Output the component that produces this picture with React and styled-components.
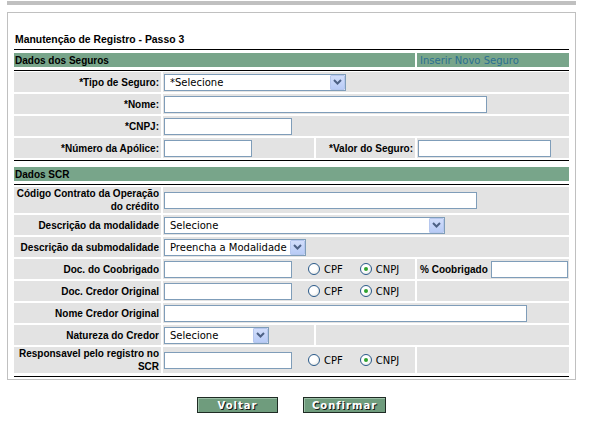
import React from "react"
import styled, { createGlobalStyle } from "styled-components"

const GlobalStyle = createGlobalStyle`
  body {
    margin: 0;
    background: #fff;
    font-family: "DejaVu Sans", Verdana, sans-serif;
    font-size: 10px;
    color: #000;
  }
`

const TopBar = styled.div`
  margin: 1px 0 0 7px;
  width: 569px;
  height: 4px;
  background: #c0c0c0;
`

const Box = styled.div`
  box-sizing: border-box;
  margin: 7px 0 0 7px;
  width: 569px;
  border: 1px solid #c0c0c0;
  padding: 0 6px 2px 6px;
`

const Title = styled.div`
  box-sizing: border-box;
  height: 37px;
  display: flex;
  align-items: flex-end;
  padding: 0 0 3px 1px;
  border-bottom: 1px solid #000;
  font-family: "Liberation Sans", Arial, sans-serif;
  font-weight: bold;
  font-size: 10.4px;
  line-height: 13px;
`

const Rule = styled.div`
  height: 1px;
  background: #000;
  margin-top: ${p => p.$top}px;
  margin-bottom: ${p => p.$bottom}px;
`

const Grid = styled.div`
  display: grid;
  grid-template-columns: 147px 151px 99px 152px;
  column-gap: 2px;
  row-gap: 2px;
  margin-top: ${p => p.$top || 0}px;
`

const Head = styled.div`
  height: 14px;
  background: #78a58a;
  display: flex;
  align-items: center;
  padding-left: ${p => (p.$link ? 3 : 1)}px;
  grid-column: ${p => p.$span || "auto"};
  font-family: ${p => (p.$link ? '"DejaVu Sans", Verdana, sans-serif' : '"Liberation Sans", Arial, sans-serif')};
  font-weight: ${p => (p.$link ? "normal" : "bold")};
  font-size: 10px;
  color: ${p => (p.$link ? "#2b6f92" : "#000")};
`

const Label = styled.div`
  box-sizing: border-box;
  height: ${p => p.$h || 20}px;
  background: #e3e3e3;
  display: flex;
  align-items: center;
  justify-content: flex-end;
  text-align: right;
  padding-right: 2px;
  font-family: "Liberation Sans", Arial, sans-serif;
  font-weight: bold;
  font-size: 10px;
  line-height: 13px;
`

const Cell = styled.div`
  box-sizing: border-box;
  height: ${p => p.$h || 20}px;
  background: #e3e3e3;
  display: flex;
  align-items: center;
  padding-left: ${p => p.$pad ?? 1}px;
  grid-column: ${p => p.$span || "auto"};
`

const Input = styled.input`
  box-sizing: border-box;
  width: ${p => p.$w}px;
  height: 17px;
  border: 1px solid #7f9db9;
  background: #fff;
  margin: 0;
  padding: 0 3px;
  font-family: "DejaVu Sans", Verdana, sans-serif;
  font-size: 10px;
  outline: none;
`

const Select = styled.div`
  box-sizing: border-box;
  width: ${p => p.$w}px;
  height: 17px;
  border: 1px solid #7f9db9;
  background: #fff;
  display: flex;
  align-items: center;
  padding: 0 0 0 5px;
  font-family: "DejaVu Sans", Verdana, sans-serif;
  font-size: 10px;
  white-space: nowrap;
`

const SelectText = styled.span`
  flex: 1;
  overflow: hidden;
`

const Arrow = styled.span`
  box-sizing: border-box;
  width: 15px;
  height: 15px;
  border: 1px solid #b6c7ee;
  border-radius: 1px;
  background: linear-gradient(#d2defb, #b8cbf6);
  display: flex;
  align-items: center;
  justify-content: center;
`

const Radio = styled.span`
  box-sizing: border-box;
  width: 12px;
  height: 12px;
  border: 1px solid #2a5a8a;
  border-radius: 50%;
  background: radial-gradient(circle at 40% 40%, #fff 40%, #dcdcd6);
  display: flex;
  align-items: center;
  justify-content: center;
  margin-left: ${p => p.$left}px;
  margin-right: 4px;
  &::after {
    content: "";
    width: 4px;
    height: 4px;
    border-radius: 50%;
    background: ${p => (p.$on ? "#2fa32f" : "transparent")};
  }
`

const RadioText = styled.span`
  font-family: "DejaVu Sans", Verdana, sans-serif;
  font-size: 10px;
`

const InlineLabel = styled.span`
  font-family: "Liberation Sans", Arial, sans-serif;
  font-weight: bold;
  font-size: 10px;
  margin-right: 3px;
`

const Buttons = styled.div`
  width: 569px;
  margin: 17px 0 0 7px;
  display: flex;
  justify-content: center;
  gap: 25px;
`

const Button = styled.button`
  box-sizing: border-box;
  width: ${p => p.$w}px;
  height: 16px;
  padding: 0;
  border: 1px solid #1f2b24;
  background: #6f9c7d;
  box-shadow: inset 1px 1px 0 #9cc0a7;
  color: #fff;
  font-family: "DejaVu Sans", Verdana, sans-serif;
  font-weight: bold;
  font-size: 10px;
  letter-spacing: 1px;
  text-shadow: 1px 1px 0 #111;
  cursor: pointer;
`

const Chevron = () => (
  <svg width="9" height="6" viewBox="0 0 9 6">
    <polyline points="1,1 4.5,4.5 8,1" fill="none" stroke="#4d6185" strokeWidth="2" />
  </svg>
)

const Combo = ({ w, children }) => (
  <Select $w={w}>
    <SelectText>{children}</SelectText>
    <Arrow><Chevron /></Arrow>
  </Select>
)

const DocChoice = () => (
  <>
    <Input $w={128} />
    <Radio $left={16} />
    <RadioText>CPF</RadioText>
    <Radio $left={17} $on />
    <RadioText>CNPJ</RadioText>
  </>
)

export default function App() {
  return (
    <>
      <GlobalStyle />
      <TopBar />
      <Box>
        <Title>Manutenção de Registro - Passo 3</Title>

        <Grid $top={3}>
          <Head $span="1 / 4">Dados dos Seguros</Head>
          <Head $link>Inserir Novo Seguro</Head>
        </Grid>
        <Rule $top={3} $bottom={1} />
        <Grid>
          <Label>*Tipo de Seguro:</Label>
          <Cell $span="2 / 5"><Combo w={182}>*Selecione</Combo></Cell>

          <Label>*Nome:</Label>
          <Cell $span="2 / 5"><Input $w={323} /></Cell>

          <Label>*CNPJ:</Label>
          <Cell $span="2 / 5"><Input $w={128} /></Cell>

          <Label>*Número da Apólice:</Label>
          <Cell><Input $w={88} /></Cell>
          <Label>*Valor do Seguro:</Label>
          <Cell><Input $w={133} /></Cell>
        </Grid>

        <Rule $top={2} $bottom={6} />
        <Grid>
          <Head $span="1 / 5">Dados SCR</Head>
        </Grid>
        <Rule $top={3} $bottom={2} />
        <Grid>
          <Label $h={26}>Código Contrato da Operação<br />do crédito</Label>
          <Cell $h={26} $span="2 / 5"><Input $w={313} /></Cell>

          <Label>Descrição da modalidade</Label>
          <Cell $span="2 / 5"><Combo w={281}>Selecione</Combo></Cell>

          <Label>Descrição da submodalidade</Label>
          <Cell $span="2 / 5"><Combo w={142}>Preencha a Modalidade</Combo></Cell>

          <Label>Doc. do Coobrigado</Label>
          <Cell $span="2 / 4"><DocChoice /></Cell>
          <Cell $pad={3}>
            <InlineLabel>% Coobrigado</InlineLabel>
            <Input $w={77} />
          </Cell>

          <Label>Doc. Credor Original</Label>
          <Cell $span="2 / 4"><DocChoice /></Cell>
          <Cell />

          <Label>Nome Credor Original</Label>
          <Cell $span="2 / 5"><Input $w={363} /></Cell>

          <Label>Natureza do Credor</Label>
          <Cell><Combo w={105}>Selecione</Combo></Cell>
          <Cell $span="3 / 5" />

          <Label $h={26}>Responsavel pelo registro no<br />SCR</Label>
          <Cell $h={26} $span="2 / 4"><DocChoice /></Cell>
          <Cell $h={26} />
        </Grid>
        <Rule $top={3} $bottom={0} />
      </Box>

      <Buttons>
        <Button $w={81}>Voltar</Button>
        <Button $w={83}>Confirmar</Button>
      </Buttons>
    </>
  )
}
